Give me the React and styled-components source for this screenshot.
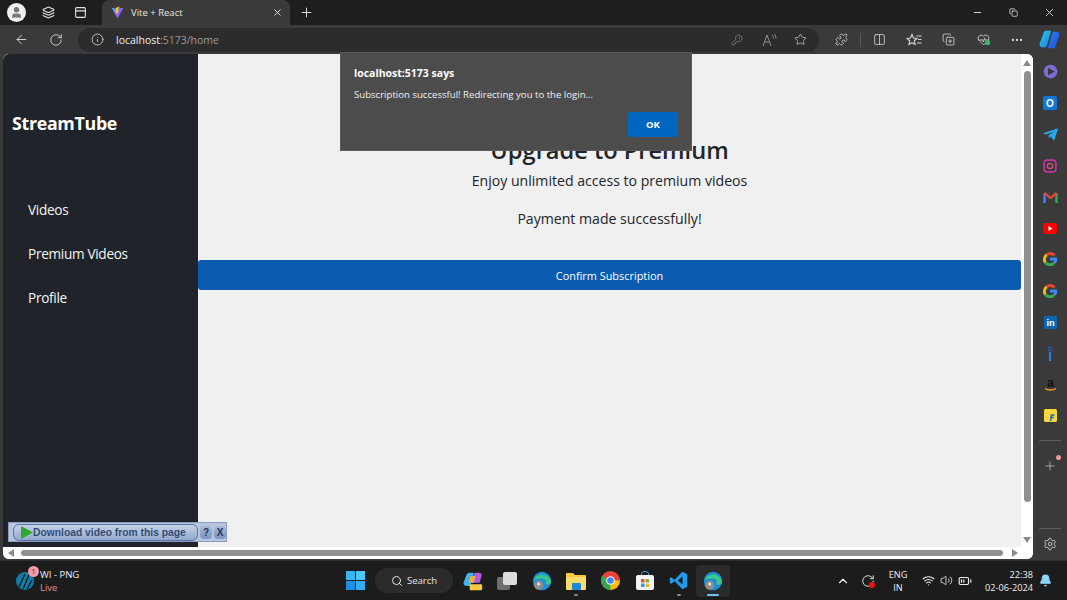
import styled, { createGlobalStyle } from "styled-components";
import {
  ArrowLeft,
  RotateCw,
  Info,
  KeyRound,
  Star,
  Puzzle,
  Columns2,
  Ellipsis,
  Plus,
  Settings,
  X,
  Minus,
  Copy,
  Search,
  ChevronUp,
  Wifi,
  Volume2,
  BatteryMedium,
  Bell,
  User,
  PanelTop,
  Layers,
  HeartPulse,
  CopyPlus,
} from "lucide-react";

const GlobalStyle = createGlobalStyle`
  html, body {
    margin: 0;
    padding: 0;
    width: 1067px;
    height: 600px;
    overflow: hidden;
    background: #1c1c1c;
    font-family: "Open Sans", "Noto Sans", sans-serif;
  }
  * { box-sizing: border-box; }
`;

const navItems = ["Videos", "Premium Videos", "Profile"];

const Screen = styled.div`
  position: relative;
  width: 1067px;
  height: 600px;
  display: flex;
  flex-direction: column;
  overflow: hidden;
`;

/* browser tab strip */
const TabStrip = styled.div`
  height: 25px;
  background: #1e1e1e;
  display: flex;
  align-items: flex-end;
  color: #e4e4e4;
`;

const StripButton = styled.div`
  width: ${(p) => p.$w || 33}px;
  height: 25px;
  display: flex;
  align-items: center;
  justify-content: center;
  flex: none;
`;

const Avatar = styled.div`
  width: 19px;
  height: 19px;
  border-radius: 50%;
  background: #f0f0f0;
  color: #555;
  display: flex;
  align-items: center;
  justify-content: center;
`;

const Tab = styled.div`
  width: 188px;
  height: 25px;
  margin-left: 5px;
  background: #3a3a3a;
  border-radius: 7px 7px 0 0;
  display: flex;
  align-items: center;
  padding: 0 7px 0 9px;
  gap: 7px;
  font-size: 9.5px;
  color: #e8e8e8;
`;

const TabTitle = styled.span`
  flex: 1;
`;

const WindowButtons = styled.div`
  margin-left: auto;
  display: flex;
  height: 25px;
`;

/* address bar row */
const Toolbar = styled.div`
  height: 29px;
  background: #3a3a3a;
  display: flex;
  align-items: center;
  color: #d8d8d8;
  flex: none;
`;

const ToolButton = styled.div`
  position: relative;
  width: ${(p) => p.$w || 32}px;
  height: 26px;
  margin-left: ${(p) => p.$ml || 0}px;
  display: flex;
  align-items: center;
  justify-content: center;
  flex: none;
  color: ${(p) => p.$color || "inherit"};
`;

const HealthCheck = styled.span`
  position: absolute;
  left: 50%;
  top: 13px;
  margin-left: 2px;
  width: 5px;
  height: 5px;
  border-radius: 1.5px;
  background: #3fb56a;
`;

const AddressBar = styled.div`
  width: 741px;
  height: 24px;
  flex: none;
  margin-left: 7px;
  background: #2c2c2c;
  border-radius: 12px;
  display: flex;
  align-items: center;
  padding: 0 3px 0 13px;
  font-size: 10.5px;
  color: #9a9a9a;
`;

const Host = styled.span`
  color: #f0f0f0;
`;

const Url = styled.div`
  margin-left: 12px;
  flex: 1;
`;

const AddressIcons = styled.div`
  display: flex;
  color: #8c8c8c;
`;

const Divider = styled.div`
  width: 1px;
  height: 14px;
  flex: none;
  background: #5a5a5a;
  margin: 0 3px;
`;

/* page + edge sidebar */
const Middle = styled.div`
  flex: 1;
  display: flex;
  background: #3a3a3a;
  min-height: 0;
`;

const Viewport = styled.div`
  width: 1030px;
  margin-left: 3px;
  margin-bottom: 1px;
  border-radius: 6px;
  overflow: hidden;
  background: #fff;
  display: grid;
  grid-template-columns: 1fr 12px;
  grid-template-rows: 1fr 12px;
`;

const Page = styled.div`
  display: flex;
  background: #f0f0f0;
  min-height: 0;
`;

const SideNav = styled.nav`
  width: 195px;
  flex: none;
  background: #20242a;
  color: #fff;
  padding: 55px 9px 0;
`;

const Brand = styled.div`
  font-size: 17.8px;
  font-weight: 700;
  letter-spacing: -0.3px;
  line-height: 28px;
  margin-bottom: 63px;
`;

const NavLink = styled.div`
  font-size: 13.6px;
  letter-spacing: -0.3px;
  line-height: 20px;
  padding-left: 16px;
  margin-bottom: 24px;
  color: #f4f4f4;
`;

const Content = styled.main`
  width: 823px;
  flex: none;
  padding-top: 78px;
  text-align: center;
  color: #212529;
`;

const Heading = styled.h1`
  margin: 0;
  font-size: 23.6px;
  font-weight: 600;
  line-height: 36px;
`;

const Lead = styled.p`
  margin: 2px 0 0;
  font-size: 14.1px;
  line-height: 22px;
`;

const Notice = styled.p`
  margin: 16px 0 0;
  font-size: 14.1px;
  line-height: 22px;
`;

const ConfirmButton = styled.button`
  display: block;
  width: 100%;
  height: 30px;
  margin-top: 30px;
  border: 0;
  border-radius: 3px;
  background: #0b5cb0;
  color: #fff;
  font: 10.9px "Open Sans", sans-serif;
`;

const VScroll = styled.div`
  background: #fff;
  display: flex;
  flex-direction: column;
  align-items: center;
  padding: 6px 0 4px;
`;

const HScroll = styled.div`
  background: #fff;
  display: flex;
  align-items: center;
  padding: 0 3px 0 5px;
`;

const Arrow = styled.div`
  width: 0;
  height: 0;
  flex: none;
  border-style: solid;
  border-color: transparent;
  ${(p) => p.$dir === "up" && "border-width: 0 4px 6px; border-bottom-color: #8a8a8a;"}
  ${(p) => p.$dir === "down" && "border-width: 6px 4px 0; border-top-color: #8a8a8a;"}
  ${(p) => p.$dir === "left" && "border-width: 4px 6px 4px 0; border-right-color: #8a8a8a;"}
  ${(p) => p.$dir === "right" && "border-width: 4px 0 4px 6px; border-left-color: #8a8a8a;"}
`;

const VThumb = styled.div`
  width: 7px;
  height: 431px;
  margin: 5px 0 auto;
  border-radius: 4px;
  background: #8f8f8f;
`;

const HThumb = styled.div`
  width: 982px;
  height: 6px;
  margin: 0 auto 0 7px;
  border-radius: 3px;
  background: #8f8f8f;
`;

const Corner = styled.div`
  background: #fff;
`;

const EdgeBar = styled.aside`
  width: 34px;
  flex: none;
  display: flex;
  flex-direction: column;
  align-items: center;
  padding-top: 2px;
  color: #cfcfcf;
`;

const EdgeIcon = styled.div`
  width: 20px;
  height: 31.3px;
  flex: none;
  display: flex;
  align-items: center;
  justify-content: center;
`;

const EdgeRule = styled.div`
  width: 22px;
  height: 1px;
  background: #5c5c5c;
  margin-top: ${(p) => p.$top || 0}px;
  flex: none;
`;

const AddWrap = styled.div`
  position: relative;
  margin-top: 15px;
  height: 20px;
  display: flex;
  align-items: center;
`;

const RedDot = styled.span`
  position: absolute;
  top: -1px;
  right: -4px;
  width: 5px;
  height: 5px;
  border-radius: 50%;
  background: #f29a9a;
`;

/* taskbar */
const Taskbar = styled.footer`
  height: 40px;
  flex: none;
  background: #1c1c1c;
  border-top: 1px solid #2d2d2d;
  display: grid;
  grid-template-columns: 340px 1fr 247px;
  color: #eee;
`;

const Weather = styled.div`
  display: flex;
  align-items: center;
  padding-left: 16px;
  gap: 6px;
`;

const WidgetIcon = styled.div`
  position: relative;
  width: 18px;
  height: 20px;
`;

const Badge = styled.span`
  position: absolute;
  top: -5px;
  right: -5px;
  width: 11px;
  height: 11px;
  border-radius: 50%;
  background: #f79aa2;
  color: #222;
  font-size: 7px;
  line-height: 11px;
  text-align: center;
`;

const WidgetText = styled.div`
  font-size: 9.5px;
  line-height: 13px;
`;

const LiveText = styled.div`
  color: #e58a8a;
`;

const Dock = styled.div`
  display: flex;
  align-items: center;
`;

const DockItem = styled.div`
  position: relative;
  width: ${(p) => p.$w || 34.3}px;
  height: 32px;
  display: flex;
  align-items: center;
  justify-content: center;
  border-radius: 4px;
  flex: none;
  background: ${(p) => (p.$active ? "#2b2b2b" : "transparent")};
`;

const DockMark = styled.span`
  position: absolute;
  bottom: 1px;
  left: 50%;
  height: 2px;
  width: ${(p) => (p.$active ? 12 : 4)}px;
  transform: translateX(-50%);
  border-radius: 1px;
  background: ${(p) => (p.$active ? "#6cc5f0" : "#8a8a8a")};
`;

const SearchBox = styled.div`
  width: 78px;
  height: 25px;
  margin: 0 3px 0 5px;
  border-radius: 13px;
  background: #2b2b2b;
  display: flex;
  align-items: center;
  justify-content: center;
  gap: 4px;
  font-size: 9.5px;
  color: #e6e6e6;
  flex: none;
`;

const Tray = styled.div`
  display: flex;
  align-items: center;
  padding-left: 13px;
  font-size: 9.2px;
`;

const TrayIcon = styled.div`
  position: relative;
  width: ${(p) => p.$w || 20}px;
  margin-left: ${(p) => p.$ml || 0}px;
  display: flex;
  justify-content: center;
  flex: none;
`;

const SyncDot = styled.span`
  position: absolute;
  right: 8px;
  bottom: 0;
  width: 6px;
  height: 6px;
  border-radius: 50%;
  background: #f01010;
`;

const Lang = styled.div`
  width: 30px;
  text-align: center;
  line-height: 13px;
  flex: none;
`;

const Clock = styled.div`
  width: 58px;
  text-align: right;
  line-height: 13px;
  flex: none;
`;

/* overlays */
const Dialog = styled.div`
  position: absolute;
  left: 340px;
  top: 52px;
  width: 352px;
  height: 99px;
  background: #4c4c4c;
  border: 1px solid #5c5c5c;
  padding: 13px 13px 0;
  color: #fff;
`;

const DialogTitle = styled.div`
  font-size: 10.5px;
  font-weight: 700;
  line-height: 14px;
`;

const DialogText = styled.div`
  margin-top: 8px;
  font-size: 9.6px;
  line-height: 14px;
  color: #f0f0f0;
`;

const DialogActions = styled.div`
  margin-top: 10px;
  display: flex;
  justify-content: flex-end;
`;

const OkButton = styled.button`
  width: 50px;
  height: 25px;
  border: 0;
  border-radius: 2px;
  background: #0067c0;
  color: #fff;
  font: 700 9.5px "Open Sans", sans-serif;
`;

const DownloadBar = styled.div`
  position: absolute;
  left: 8px;
  top: 522px;
  width: 219px;
  height: 20px;
  display: flex;
  align-items: center;
  padding-left: 4px;
  gap: 2px;
  background: #b7c5de;
  border: 1px solid #8c9cc0;
`;

const DownloadButton = styled.div`
  width: 186px;
  height: 17px;
  display: flex;
  align-items: center;
  gap: 0;
  padding-left: 6px;
  border: 1px solid #5a74a6;
  border-radius: 6px;
  background: linear-gradient(#c6d3e8, #93a8cc);
  font: 700 10.3px "Liberation Sans", sans-serif;
  color: #354c74;
`;

const MiniButton = styled.div`
  width: 12px;
  height: 13px;
  border-radius: 4px;
  background: linear-gradient(#a8bad8, #7c93bf);
  color: #1f3358;
  font: 700 10px/13px "Liberation Sans", sans-serif;
  text-align: center;
  flex: none;
`;

/* small drawn logos */
const ViteLogo = () => (
  <svg width="13" height="13" viewBox="0 0 24 24">
    <defs>
      <linearGradient id="vg" x1="0" y1="0" x2="1" y2="1">
        <stop offset="0" stopColor="#41a5ff" />
        <stop offset="1" stopColor="#bd34fe" />
      </linearGradient>
    </defs>
    <path d="M1 3l11 20L23 3l-11 2z" fill="url(#vg)" />
    <path d="M16 1L9 3l-1 10 3-1-1 5 5-9-3 1z" fill="#ffc517" />
  </svg>
);

const ReadAloud = () => (
  <svg width="15" height="14" viewBox="0 0 15 14" fill="none" stroke="currentColor">
    <path d="M1 13L5 2l4 11M2.500 9h5" />
    <path d="M10 2c1 1 1.500 2 1.500 3.500M12.500 1c1 1.200 1.500 2.700 1.500 4.500" />
  </svg>
);

const FavouritesIcon = () => (
  <svg width="16" height="14" viewBox="0 0 16 14" fill="none" stroke="currentColor" strokeWidth="1.100">
    <path d="M6 1.500l1.500 3.500 3.500.4-2.700 2.400.8 3.700L6 9.700l-3.100 1.800.8-3.700L1 5.400l3.500-.4z" />
    <path d="M10.500 3h5M12 6.500h3.500M11 10h4.500" />
  </svg>
);

const CopilotLogo = () => (
  <svg width="21" height="21" viewBox="0 0 24 24">
    <defs>
      <linearGradient id="cl" x1="0" y1="0" x2="1" y2="1">
        <stop offset="0" stopColor="#2fd0e8" />
        <stop offset="1" stopColor="#1a78e0" />
      </linearGradient>
      <linearGradient id="cr" x1="0" y1="0" x2="1" y2="1">
        <stop offset="0" stopColor="#2a80f0" />
        <stop offset="1" stopColor="#1f50d8" />
      </linearGradient>
    </defs>
    <path d="M8 2h6L9 19c-.5 1.500-2 2-3 2H4c-3 0-4-2-3-5L5 5c.5-2 1.500-3 3-3z" fill="url(#cl)" />
    <path d="M16 22h-6l5-17c.5-1.500 2-2 3-2h2c3 0 4 2 3 5l-4 11c-.5 2-1.500 3-3 3z" fill="url(#cr)" />
  </svg>
);

const Square = ({ bg, color, size = 14, radius = 2, weight = 700, children }) => (
  <svg width={size} height={size} viewBox="0 0 14 14">
    <rect width="14" height="14" rx={radius} fill={bg} />
    {children && (
      <text x="7" y="11" textAnchor="middle" fontSize="10" fontWeight={weight} fontFamily="Liberation Sans" fill={color}>
        {children}
      </text>
    )}
  </svg>
);

const GoogleLogo = () => (
  <svg width="14" height="14" viewBox="0 0 24 24" fill="none" strokeWidth="5">
    <path d="M20 6a10 10 0 0 0-14-1" stroke="#ea4335" />
    <path d="M6 5a10 10 0 0 0-2 13" stroke="#fbbc05" />
    <path d="M4 18a10 10 0 0 0 15 1" stroke="#34a853" />
    <path d="M19 19c2-2 3-4 3-7H12" stroke="#4285f4" />
  </svg>
);

const EdgeLogo = ({ size = 20 }) => (
  <svg width={size} height={size} viewBox="0 0 24 24">
    <circle cx="12" cy="12" r="11" fill="#1a8fd8" />
    <path d="M2 11C4 3 20 0 23 13c0 3-4 4-7 3 2-3 0-7-4-7-5 0-8 1-10 2z" fill="#37c88a" />
    <circle cx="8" cy="17" r="5.500" fill="#8d8d8d" />
    <circle cx="8" cy="15.500" r="1.800" fill="#e8e8e8" />
  </svg>
);

const WindowsLogo = () => (
  <svg width="19" height="19" viewBox="0 0 19 19">
    <rect width="9" height="9" fill="#35b6f2" />
    <rect x="10" width="9" height="9" fill="#4cc6f5" />
    <rect y="10" width="9" height="9" fill="#1d8fe0" />
    <rect x="10" y="10" width="9" height="9" fill="#35aef0" />
  </svg>
);

const ChromeLogo = () => (
  <svg width="19" height="19" viewBox="0 0 24 24">
    <circle cx="12" cy="12" r="12" fill="#ea4335" />
    <path d="M12 12L1.600 18a12 12 0 0 1 0-12z" fill="#34a853" />
    <path d="M12 12l-10.400 6A12 12 0 0 0 12 24l6-12z" fill="#34a853" />
    <path d="M12 12h12a12 12 0 0 1-12 12z" fill="#fbbc05" />
    <circle cx="12" cy="12" r="5.500" fill="#fff" />
    <circle cx="12" cy="12" r="4.200" fill="#4285f4" />
  </svg>
);

const FolderLogo = () => (
  <svg width="20" height="18" viewBox="0 0 20 18">
    <path d="M0 2a1 1 0 0 1 1-1h6l2 2h10a1 1 0 0 1 1 1v13H0z" fill="#f8c93f" />
    <rect x="0" y="5" width="20" height="13" rx="1" fill="#fbdc6a" />
    <rect x="6" y="11" width="9" height="7" rx="1" fill="#1e88d8" />
  </svg>
);

const StoreLogo = () => (
  <svg width="18" height="19" viewBox="0 0 18 19">
    <path d="M5.500 4V2.500a3.500 2 0 0 1 7 0V4" stroke="#4aa7e8" fill="none" />
    <rect y="4" width="18" height="15" rx="2" fill="#f4f4f4" />
    <rect x="5" y="8" width="3.500" height="3.500" fill="#e8502e" />
    <rect x="9.500" y="8" width="3.500" height="3.500" fill="#7db83a" />
    <rect x="5" y="12.500" width="3.500" height="3.500" fill="#2a9de8" />
    <rect x="9.500" y="12.500" width="3.500" height="3.500" fill="#f8b826" />
  </svg>
);

const VsCodeLogo = () => (
  <svg width="19" height="19" viewBox="0 0 24 24">
    <path d="M17 1l6 3v16l-6 3L7 13l-4 3-2-1V9l2-1 4 3zM17 7l-6 5 6 5z" fill="#1f9cf0" />
  </svg>
);

const TaskViewLogo = () => (
  <svg width="20" height="18" viewBox="0 0 20 18">
    <rect x="0" y="5" width="13" height="13" rx="2" fill="#6d6d6d" />
    <rect x="6" y="0" width="14" height="13" rx="2" fill="#dcdcdc" />
  </svg>
);

const DockCopilot = () => (
  <svg width="20" height="20" viewBox="0 0 24 24">
    <path d="M8 2h5L9 18H4C1 18 0 16 1 13L4 5c.6-2 2-3 4-3z" fill="#3fb4e8" />
    <path d="M16 2h3c3 0 4 2 3 5l-2 7H11L13 4c.4-1.300 1.500-2 3-2z" fill="#b45ce0" />
    <path d="M9 6h6l-2 8H7z" fill="#f0b040" />
    <rect x="8" y="16" width="15" height="7" rx="1" fill="#f6c944" />
  </svg>
);

const WidgetLogo = () => (
  <svg width="18" height="20" viewBox="0 0 18 20">
    <circle cx="9" cy="10" r="9" fill="#0f7ea8" />
    <path d="M3 16L9 3M7 18L13 4M11 18l5-9" stroke="#111" strokeWidth="1.300" />
  </svg>
);

const edgeIcons = [
  <svg key="m" width="15" height="15" viewBox="0 0 24 24"><circle cx="12" cy="12" r="11" fill="#7d6bd8" /><path d="M8 6l11 6-11 6z" fill="#3a3a3a" /></svg>,
  <Square key="o" bg="#0f78d4" color="#fff">O</Square>,
  <svg key="t" width="15" height="13" viewBox="0 0 24 20"><path d="M0 8L24 0l-6 20-6-7-3 3V11l9-6-13 5z" fill="#29a9ea" /></svg>,
  <svg key="i" width="14" height="14" viewBox="0 0 24 24" fill="none"><rect x="2" y="2" width="20" height="20" rx="5" stroke="#c2349c" strokeWidth="3" /><circle cx="12" cy="12" r="4.500" stroke="#d8507c" strokeWidth="2" /></svg>,
  <svg key="g" width="15" height="12" viewBox="0 0 24 20" fill="none" strokeWidth="4"><path d="M2 20V4" stroke="#4285f4" /><path d="M22 20V4" stroke="#34a853" /><path d="M2 3l10 9" stroke="#ea4335" /><path d="M22 3l-10 9" stroke="#ea4335" /></svg>,
  <svg key="y" width="14" height="11" viewBox="0 0 14 11"><rect width="14" height="11" rx="2.500" fill="#f00" /><path d="M5.500 3l4 2.500-4 2.500z" fill="#fff" /></svg>,
  <GoogleLogo key="g1" />,
  <GoogleLogo key="g2" />,
  <Square key="l" bg="#0a66b0" color="#fff" size={13} radius={1}>in</Square>,
  <svg key="f" width="6" height="15" viewBox="0 0 6 15"><circle cx="3" cy="3" r="2" fill="none" stroke="#2a5fd0" /><rect x="2" y="6" width="2" height="9" fill="#2a7fe0" /></svg>,
  <svg key="a" width="15" height="15" viewBox="0 0 15 15"><text x="7.500" y="10" textAnchor="middle" fontSize="12" fontWeight="700" fontFamily="Liberation Sans" fill="#111">a</text><path d="M2 11.500c3 2 8 2 11 0" stroke="#f59a1c" fill="none" strokeWidth="1.300" /></svg>,
  <svg key="k" width="13" height="13" viewBox="0 0 13 13"><rect width="13" height="13" rx="1.500" fill="#f8d838" /><path d="M6.500 12l1-6h3M6.800 8.500h3" stroke="#1a66d0" strokeWidth="1.600" fill="none" /></svg>,
];

function App() {
  return (
    <Screen>
      <GlobalStyle />
      <TabStrip>
        <StripButton $w={33}>
          <Avatar><User size={13} fill="#777" stroke="#777" /></Avatar>
        </StripButton>
        <StripButton $w={31}><Layers size={13} /></StripButton>
        <StripButton $w={33}><PanelTop size={13} /></StripButton>
        <Tab>
          <ViteLogo />
          <TabTitle>Vite + React</TabTitle>
          <X size={11} />
        </Tab>
        <StripButton $w={32}><Plus size={15} strokeWidth={1.5} /></StripButton>
        <WindowButtons>
          <StripButton $w={36}><Minus size={11} /></StripButton>
          <StripButton $w={36}><Copy size={9} /></StripButton>
          <StripButton $w={36}><X size={13} strokeWidth={1.5} /></StripButton>
        </WindowButtons>
      </TabStrip>

      <Toolbar>
        <ToolButton $w={37} $ml={3}><ArrowLeft size={15} strokeWidth={1.5} /></ToolButton>
        <ToolButton $w={31}><RotateCw size={14} strokeWidth={1.5} /></ToolButton>
        <AddressBar>
          <Info size={13} strokeWidth={1.5} color="#ddd" />
          <Url><Host>localhost</Host>:5173/home</Url>
          <AddressIcons>
            <ToolButton><KeyRound size={12} strokeWidth={1.5} /></ToolButton>
            <ToolButton><ReadAloud /></ToolButton>
            <ToolButton $w={31} $color="#bbb"><Star size={13} strokeWidth={1.5} /></ToolButton>
          </AddressIcons>
        </AddressBar>
        <ToolButton $w={32} $ml={6}><Puzzle size={13} strokeWidth={1.5} /></ToolButton>
        <Divider />
        <ToolButton $w={30}><Columns2 size={13} strokeWidth={1.5} /></ToolButton>
        <ToolButton $w={40}><FavouritesIcon /></ToolButton>
        <ToolButton $w={28}><CopyPlus size={13} strokeWidth={1.5} /></ToolButton>
        <ToolButton $w={42}><HeartPulse size={13} strokeWidth={1.5} /><HealthCheck /></ToolButton>
        <ToolButton $w={26}><Ellipsis size={14} /></ToolButton>
        <ToolButton $w={35} $ml={2}><CopilotLogo /></ToolButton>
      </Toolbar>

      <Middle>
        <Viewport>
          <Page>
            <SideNav>
              <Brand>StreamTube</Brand>
              {navItems.map((item) => (
                <NavLink key={item}>{item}</NavLink>
              ))}
            </SideNav>
            <Content>
              <Heading>Upgrade to Premium</Heading>
              <Lead>Enjoy unlimited access to premium videos</Lead>
              <Notice>Payment made successfully!</Notice>
              <ConfirmButton>Confirm Subscription</ConfirmButton>
            </Content>
          </Page>
          <VScroll>
            <Arrow $dir="up" />
            <VThumb />
            <Arrow $dir="down" />
          </VScroll>
          <HScroll>
            <Arrow $dir="left" />
            <HThumb />
            <Arrow $dir="right" />
          </HScroll>
          <Corner />
        </Viewport>
        <EdgeBar>
          {edgeIcons.map((icon) => (
            <EdgeIcon key={icon.key}>{icon}</EdgeIcon>
          ))}
          <EdgeRule $top={8} />
          <AddWrap>
            <Plus size={14} strokeWidth={1.2} />
            <RedDot />
          </AddWrap>
          <EdgeRule $top={52} />
          <EdgeIcon><Settings size={14} strokeWidth={1.5} /></EdgeIcon>
        </EdgeBar>
      </Middle>

      <Taskbar>
        <Weather>
          <WidgetIcon>
            <WidgetLogo />
            <Badge>1</Badge>
          </WidgetIcon>
          <WidgetText>
            <div>WI - PNG</div>
            <LiveText>Live</LiveText>
          </WidgetText>
        </Weather>
        <Dock>
          <DockItem $w={30}><WindowsLogo /></DockItem>
          <SearchBox><Search size={12} />Search</SearchBox>
          <DockItem><DockCopilot /></DockItem>
          <DockItem><TaskViewLogo /></DockItem>
          <DockItem><EdgeLogo /></DockItem>
          <DockItem><FolderLogo /><DockMark /></DockItem>
          <DockItem><ChromeLogo /></DockItem>
          <DockItem><StoreLogo /></DockItem>
          <DockItem><VsCodeLogo /><DockMark /></DockItem>
          <DockItem $active><EdgeLogo /><DockMark $active /></DockItem>
        </Dock>
        <Tray>
          <TrayIcon><ChevronUp size={14} /></TrayIcon>
          <TrayIcon $w={30}><RotateCw size={14} strokeWidth={1.5} /><SyncDot /></TrayIcon>
          <Lang>ENG<br />IN</Lang>
          <TrayIcon $ml={5}><Wifi size={13} /></TrayIcon>
          <TrayIcon $w={17}><Volume2 size={13} strokeWidth={1.5} /></TrayIcon>
          <TrayIcon><BatteryMedium size={14} /></TrayIcon>
          <Clock>22:38<br />02-06-2024</Clock>
          <TrayIcon $ml={2}><Bell size={13} fill="#8fd3f5" stroke="#8fd3f5" /></TrayIcon>
        </Tray>
      </Taskbar>

      <Dialog>
        <DialogTitle>localhost:5173 says</DialogTitle>
        <DialogText>Subscription successful! Redirecting you to the login...</DialogText>
        <DialogActions>
          <OkButton>OK</OkButton>
        </DialogActions>
      </Dialog>

      <DownloadBar>
        <DownloadButton>
          <svg width="13" height="13" viewBox="0 0 13 13"><path d="M1 0l12 6.500L1 13z" fill="#2fa82f" /></svg>
          Download video from this page
        </DownloadButton>
        <MiniButton>?</MiniButton>
        <MiniButton>X</MiniButton>
      </DownloadBar>
    </Screen>
  );
}

export default App;
